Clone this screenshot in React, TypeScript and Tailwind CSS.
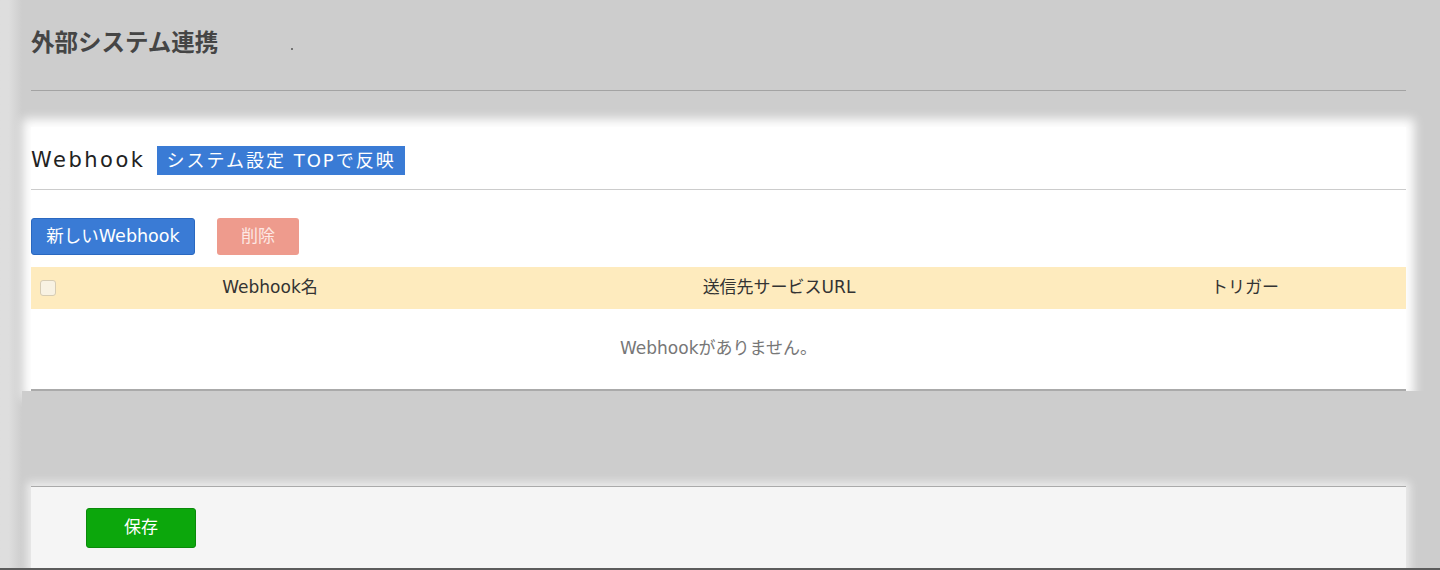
import React from "react";

export default function App() {
  return (
    <div className="relative flex h-[570px] w-[1440px] overflow-hidden bg-[#cdcdcd] font-['DejaVu_Sans','Noto_Sans_CJK_JP',sans-serif]">
      <div className="w-[22px] shrink-0 bg-gradient-to-r from-[#dedede] from-40% to-[#cdcdcd]" />
      <div className="flex flex-1 flex-col pl-[9px] pr-[34px]">
        {/* page header */}
        <div className="flex h-[91px] shrink-0 items-center border-b border-[#a3a3a3] pb-[6px]">
          <h1 className="font-['Noto_Sans_CJK_JP',sans-serif] text-[23.5px] font-bold leading-none text-[#454545]">
            外部システム連携
          </h1>
          <span className="ml-[73px] mt-[14px] h-[2px] w-[2px] rounded-full bg-[#555]" />
        </div>

        {/* highlighted card */}
        <div className="mt-[36px] shrink-0 bg-white shadow-[0_0_10px_8px_#ffffff]">
          <div className="flex items-center border-b border-[#cccccc] pb-[14px] pt-[19px]">
            <h2 className="text-[21px] font-normal leading-none tracking-[2.5px] text-[#222]">Webhook</h2>
            <span className="ml-[12px] flex h-[29px] items-center bg-[#3a7bd5] px-[9px] text-[18px] leading-none tracking-[2px] text-white">
              システム設定 TOPで反映
            </span>
          </div>
          <div className="mt-[28px] flex gap-[22px]">
            <button className="flex h-[37px] w-[164px] items-center justify-center rounded-[3px] border border-[#2a68c0] bg-[#3a7bd5] text-[17.5px] text-white">
              新しいWebhook
            </button>
            <button className="flex h-[37px] w-[82px] items-center justify-center rounded-[3px] bg-[#ee9b8d] text-[17px] text-[#fde8e4]">
              削除
            </button>
          </div>
          <div className="mt-[12px] border-b-2 border-[#aaaaaa]">
            <div className="flex h-[42px] items-center bg-[#feebbe] text-[17px] text-[#333]">
              <div className="flex w-[44px] shrink-0 items-center pl-[9px]">
                <span className="h-[16px] w-[16px] rounded-[3px] border border-[#d6ccb4] bg-[#f8f2e3]" />
              </div>
              <div className="w-[390px] shrink-0 text-center">Webhook名</div>
              <div className="w-[628px] shrink-0 text-center">送信先サービスURL</div>
              <div className="flex-1 pr-[9px] text-center">トリガー</div>
            </div>
            <div className="flex h-[80px] items-center justify-center text-[17px] text-[#777]">
              Webhookがありません。
            </div>
          </div>
        </div>

        {/* gap */}
        <div className="-ml-[9px] -mr-[34px] h-[95px] shrink-0 bg-[#cdcdcd]" />

        {/* footer */}
        <div className="relative z-10 flex-1 border-t border-[#aaaaaa] bg-[#f5f5f5] pl-[55px] pt-[21px] shadow-[0_0_8px_4px_#ececec]">
          <button className="flex h-[40px] w-[110px] items-center justify-center rounded-[3px] border border-[#0a8a0a] bg-[#0ca70c] text-[17px] text-white">
            保存
          </button>
        </div>
      </div>
      <div className="absolute bottom-0 left-0 z-20 h-[2px] w-full bg-[#5c5c5c]" />
    </div>
  );
}
